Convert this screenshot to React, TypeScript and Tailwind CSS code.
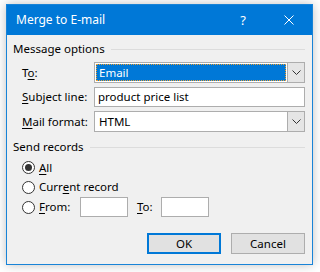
import React from "react";

function Chevron() {
  return (
    <svg width="9" height="5" viewBox="0 0 9 5" className="text-[#333]">
      <path d="M0.5 0.5 L4.5 4.5 L8.5 0.5" fill="none" stroke="currentColor" strokeWidth="1" />
    </svg>
  );
}

function Combo({ value, selected }: { value: string; selected?: boolean }) {
  return (
    <div className="flex h-[21px] flex-1 border border-[#adadad] bg-white">
      <div className="flex flex-1 p-px">
        {selected ? (
          <div className="flex flex-1 items-center border border-dotted border-[#f0a030] bg-[#0078d7] pl-[2px] text-white">
            {value}
          </div>
        ) : (
          <div className="flex flex-1 items-center pl-[3px]">{value}</div>
        )}
      </div>
      <div className="flex w-[17px] items-center justify-center border-l border-[#adadad] bg-[#e5e5e5]">
        <Chevron />
      </div>
    </div>
  );
}

function Radio({ checked }: { checked?: boolean }) {
  return (
    <div className="flex h-[13px] w-[13px] items-center justify-center rounded-full border border-[#333] bg-white">
      {checked && <div className="h-[7px] w-[7px] rounded-full bg-[#333]" />}
    </div>
  );
}

function GroupHeader({ title }: { title: string }) {
  return (
    <div className="flex h-[16px] items-center">
      <span>{title}</span>
      <div className="ml-[6px] h-px flex-1 bg-[#dcdcdc]" />
    </div>
  );
}

export default function App() {
  return (
    <div
      className="h-[272px] w-[320px] bg-white pl-[6px] pt-[4px] text-[11.5px] leading-none text-black"
      style={{ fontFamily: '"Noto Sans", "Liberation Sans", sans-serif' }}
    >
      <div className="flex h-[261px] w-[307px] flex-col border border-[#1883d7] shadow-[0_0_10px_rgba(0,0,0,0.25)]">
        {/* Title bar */}
        <div className="flex h-[30px] items-center bg-[#0078d7] text-white">
          <span className="flex-1 pl-[9px] text-[12px]">Merge to E-mail</span>
          <div className="flex h-full w-[46px] items-center justify-center text-[13px]">?</div>
          <div className="flex h-full w-[46px] items-center justify-center">
            <svg width="10" height="10" viewBox="0 0 10 10">
              <path d="M0.5 0.5 L9.5 9.5 M9.5 0.5 L0.5 9.5" stroke="white" strokeWidth="1" />
            </svg>
          </div>
        </div>

        {/* Body */}
        <div className="flex flex-1 flex-col bg-[#f0f0f0] pl-[6px] pr-[7px] pt-[6px]">
          <GroupHeader title="Message options" />

          <div className="mt-[5px] flex items-center">
            <span className="ml-[9px] w-[72px]">
              T<u className="underline-offset-2">o</u>:
            </span>
            <Combo value="Email" selected />
          </div>

          <div className="mt-[4px] flex items-center">
            <span className="ml-[9px] w-[72px]">
              <u className="underline-offset-2">S</u>ubject line:
            </span>
            <div className="flex h-[20px] flex-1 items-center border border-[#adadad] bg-white pl-[3px]">
              product price list
            </div>
          </div>

          <div className="mt-[4px] flex items-center">
            <span className="ml-[9px] w-[72px]">
              <u className="underline-offset-2">M</u>ail format:
            </span>
            <Combo value="HTML" />
          </div>

          <div className="mt-[7px]">
            <GroupHeader title="Send records" />
          </div>

          <div className="mt-[3px] flex h-[19px] items-center pl-[9px]">
            <Radio checked />
            <span className="ml-[4px]">
              <u className="underline-offset-2">A</u>ll
            </span>
          </div>
          <div className="flex h-[20px] items-center pl-[9px]">
            <Radio />
            <span className="ml-[4px]">
              Curr<u className="underline-offset-2">e</u>nt record
            </span>
          </div>
          <div className="flex h-[20px] items-center pl-[9px]">
            <Radio />
            <span className="ml-[4px] w-[41px]">
              <u className="underline-offset-2">F</u>rom:
            </span>
            <div className="h-[20px] w-[48px] border border-[#adadad] bg-white" />
            <span className="ml-[9px] w-[24px]">
              <u className="underline-offset-2">T</u>o:
            </span>
            <div className="h-[20px] w-[48px] border border-[#adadad] bg-white" />
          </div>

          <div className="mt-[16px] flex justify-end gap-[10px]">
            <button className="flex h-[21px] w-[74px] items-center justify-center border-2 border-[#0078d7] bg-[#e1e1e1]">
              OK
            </button>
            <button className="flex h-[21px] w-[74px] items-center justify-center border border-[#adadad] bg-[#e1e1e1]">
              Cancel
            </button>
          </div>
        </div>
      </div>
    </div>
  );
}
